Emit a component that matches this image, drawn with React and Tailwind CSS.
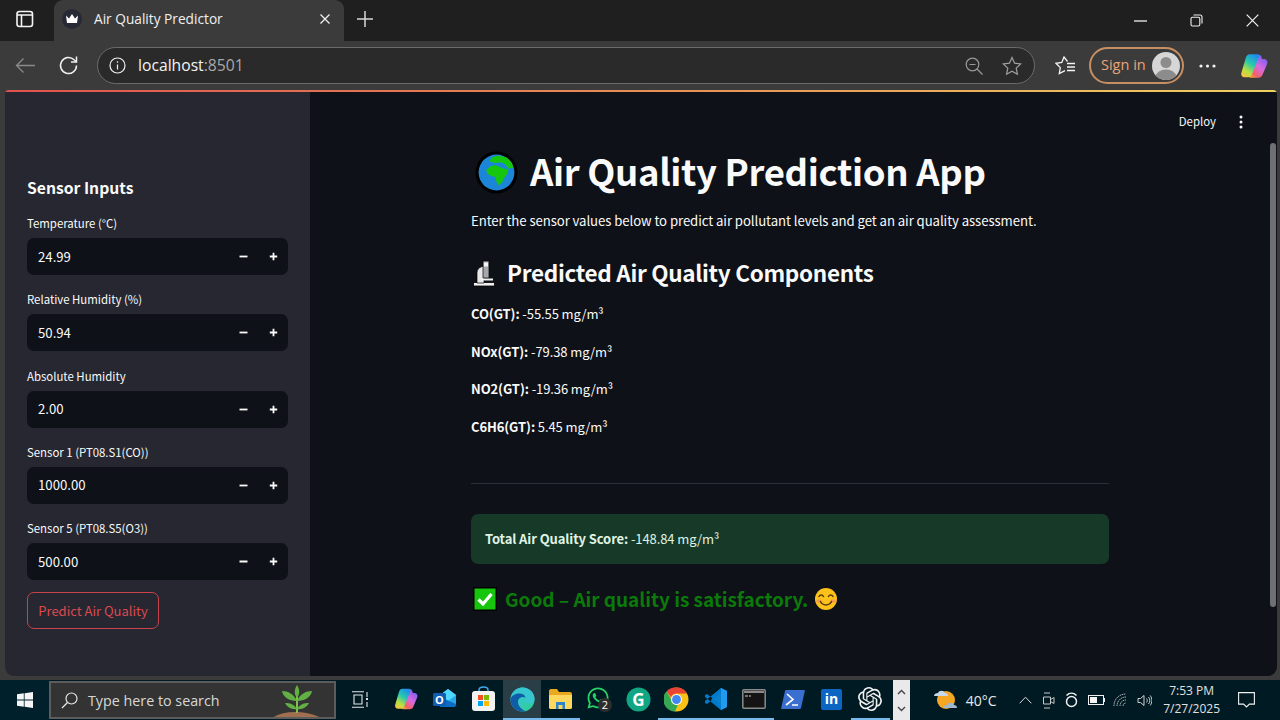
import React from "react";
import { SiOpenai } from "react-icons/si";
import { FaWhatsapp } from "react-icons/fa";

const CopilotLogo = ({ s = 26, id = "a" }) => (
  <svg width={s} height={s} viewBox="0 0 26 26">
    <defs>
      <linearGradient id={id + "l"} x1="0.75" y1="0" x2="0.2" y2="1">
        <stop offset="0" stopColor="#1f8af0" />
        <stop offset="0.4" stopColor="#25c8b0" />
        <stop offset="0.75" stopColor="#b8e040" />
        <stop offset="1" stopColor="#f5c542" />
      </linearGradient>
      <linearGradient id={id + "r"} x1="0.8" y1="0" x2="0.2" y2="1">
        <stop offset="0" stopColor="#6a5cf0" />
        <stop offset="0.5" stopColor="#d86ae0" />
        <stop offset="0.85" stopColor="#f0606a" />
        <stop offset="1" stopColor="#f59a3a" />
      </linearGradient>
    </defs>
    <path d="M17.500 2.500c1.200 0 2 .8 2.400 2l.5 2h1.800c2.400 0 3.800 2 3.100 4.300L21 21c-.6 1.800-2 3-3.800 3H10c-1.500 0-2-1-1.400-2.400L15 6c.4-1.200 1-3.500 2.500-3.500z" fill={`url(#${id}r)`} />
    <path d="M9 2h7.500c1.500 0 1.800 1 1.200 2.400L11 21c-.6 1.500-1.800 2.500-3.500 2.500h-3C2 23.500.6 21.500 1.300 19.200L5.500 5C6 3.200 7.300 2 9 2z" fill={`url(#${id}l)`} />
  </svg>
);

const GlobeEmoji = () => (
  <svg width="43" height="43" viewBox="0 0 42 42">
    <circle cx="21" cy="21" r="20.500" fill="#000" />
    <circle cx="21" cy="21" r="17.500" fill="#1b86d8" />
    <path d="M16 6.300L22.700 4.300 31 6.300 36 11.500 37.500 16.300 32.700 17 29.300 13 25.300 11 20 11.700 14.300 10.300z" fill="#16c60c" />
    <path d="M11 18.700L14.300 15.300 19.300 13.700 24.300 15.700 27.700 17 32.700 18 31 23 27.700 27.300 26.700 30.300 23.300 33.700 21 30.300 20 25.300 16 24.300 12 22.300z" fill="#16c60c" />
  </svg>
);

const Microscope = () => (
  <svg width="23" height="27" viewBox="0 0 23 27">
    <rect x=".5" y="22.500" width="21" height="3.500" fill="#f0f0f0" stroke="#000" strokeWidth=".8" />
    <path d="M4 23V12.500C4 9.500 6 7.500 9 6.500l2-.5v17z" fill="#e8e8e8" stroke="#000" strokeWidth=".7" />
    <rect x="10" y="1" width="6" height="17" fill="#a4a8ac" stroke="#000" strokeWidth=".7" />
    <rect x="11" y="2.500" width="4" height="4" fill="#f4f4f4" />
    <rect x="8" y="18.500" width="12" height="2" fill="#f0f0f0" />
  </svg>
);

const CheckEmoji = () => (
  <svg width="26" height="26" viewBox="0 0 26 26">
    <rect x="1" y="1" width="24" height="24" fill="#000" />
    <rect x="2.500" y="2.500" width="21" height="21" fill="#16c60c" />
    <path d="M6.500 13.500l4.500 4.500 8.500-10" fill="none" stroke="#fff" strokeWidth="3.200" />
  </svg>
);

const SmileEmoji = () => (
  <svg width="24" height="24" viewBox="0 0 24 24">
    <circle cx="12" cy="12" r="11" fill="#fcc21b" />
    <ellipse cx="5" cy="14" rx="2.800" ry="1.800" fill="#f49a50" />
    <ellipse cx="19" cy="14" rx="2.800" ry="1.800" fill="#f49a50" />
    <path d="M5 9.500c1-2 3.500-2 4.500 0M14.500 9.500c1-2 3.500-2 4.500 0M6.500 14.500c2 4.500 9 4.500 11 0" fill="none" stroke="#5a3a10" strokeWidth="1.500" strokeLinecap="round" />
  </svg>
);

const NumberInput = ({ label, value }) => (
  <div className="flex flex-col h-[76.250px]">
    <div className="h-[25px] text-[11.400px] leading-[20px] text-[#fafafa]">{label}</div>
    <div className="h-[37px] rounded-[7px] bg-[#0e1117] flex items-center pl-[11px]">
      <span className="flex-1 text-[13.200px] text-[#fafafa]">{value}</span>
      <span className="w-[31px] flex justify-center">
        <svg width="9" height="9" viewBox="0 0 9 9"><path d="M.5 4.500h8" stroke="#fafafa" strokeWidth="1.800" /></svg>
      </span>
      <span className="w-[29px] flex justify-center">
        <svg width="9" height="9" viewBox="0 0 9 9"><path d="M.8 4.500h7.400M4.500.8v7.400" stroke="#fafafa" strokeWidth="1.800" /></svg>
      </span>
    </div>
  </div>
);

const Reading = ({ name, value }) => (
  <p className="h-[37.700px] text-[13px] tracking-[-0.1px] leading-[24px] text-[#fafafa]">
    <b className="font-semibold">{name}:</b> {value} mg/m³
  </p>
);

const Slot = ({ active, run, children }) => (
  <div className={"w-[38.700px] h-[40px] flex items-center justify-center border-b-2 " + (run ? "border-[#76b9ed] " : "border-transparent ") + (active ? "bg-[#2a3e48]" : "")}>
    {children}
  </div>
);

const Tray = ({ w, children }) => (
  <div className="flex items-center justify-center shrink-0" style={{ width: w }}>{children}</div>
);

export default function App() {
  return (
    <div className="w-[1280px] h-[720px] overflow-hidden flex flex-col bg-[#3b3b3b] font-['Noto_Sans_CJK_SC',sans-serif]">
      {/* Title bar */}
      <div className="h-[41px] bg-[#1f1f1f] flex items-end font-['Open_Sans',sans-serif] shrink-0">
        <div className="w-[54px] h-[41px] flex items-center justify-center pb-[3px] pr-[4px]">
          <svg width="18" height="18" viewBox="0 0 18 18" fill="none" stroke="#f5f5f5" strokeWidth="1.600">
            <rect x="1" y="1.500" width="15.500" height="15" rx="2.500" />
            <path d="M1 5h15.500M5.500 5v11.500" />
          </svg>
        </div>
        <div className="w-[290px] h-[41px] mt-auto bg-[#3b3b3b] rounded-t-[9px] flex items-center pl-[8px] pr-[13px] pb-[3px]">
          <span className="w-[20px] h-[20px] rounded-full bg-[#262835] flex items-center justify-center">
            <svg width="14" height="12" viewBox="0 0 14 12"><path d="M1 2.500l3 3 3-4.500 3 4.500 3-3-1 7.500H2z" fill="#fff" /></svg>
          </span>
          <span className="ml-[12px] flex-1 text-[13.700px] text-[#f0f0f0]">Air Quality Predictor</span>
          <svg width="12" height="12" viewBox="0 0 12 12"><path d="M1.500 1.500l9 9M10.500 1.500l-9 9" stroke="#f0f0f0" strokeWidth="1.300" /></svg>
        </div>
        <div className="w-[42px] h-[41px] flex items-center justify-center pb-[3px]">
          <svg width="18" height="18" viewBox="0 0 18 18"><path d="M1 9h16M9 1v16" stroke="#d8d8d8" strokeWidth="1.500" /></svg>
        </div>
        <div className="flex-1" />
        <div className="w-[56px] h-[41px] flex items-center justify-center">
          <svg width="13" height="2" viewBox="0 0 13 2"><path d="M0 1h13" stroke="#f0f0f0" strokeWidth="1.300" /></svg>
        </div>
        <div className="w-[56px] h-[41px] flex items-center justify-center">
          <svg width="13" height="13" viewBox="0 0 13 13" fill="none" stroke="#f0f0f0" strokeWidth="1.100">
            <rect x="1" y="3.200" width="8.800" height="8.800" rx="1.500" />
            <path d="M3.500 1h6.500c1.200 0 2 .8 2 2v6.500" />
          </svg>
        </div>
        <div className="w-[56px] h-[41px] flex items-center justify-center">
          <svg width="13" height="13" viewBox="0 0 13 13"><path d="M.7.700l11.600 11.600M12.300.700L.7 12.300" stroke="#f5f5f5" strokeWidth="1.200" /></svg>
        </div>
      </div>

      {/* Toolbar */}
      <div className="h-[49px] flex items-center pl-[13px] font-['Open_Sans',sans-serif] shrink-0">
        <div className="w-[24px] flex justify-center">
          <svg width="21" height="17" viewBox="0 0 21 17" fill="none" stroke="#8a8a8a" strokeWidth="1.300"><path d="M20 8.500H1.500M8.500 1.500l-7 7 7 7" /></svg>
        </div>
        <div className="ml-[19px] w-[24px] flex justify-center">
          <svg width="21" height="21" viewBox="0 0 21 21" fill="none" stroke="#f0f0f0" strokeWidth="1.500">
            <path d="M18.500 10.500a8 8 0 1 1-2.400-5.700L18.500 7" />
            <path d="M18.500 1.500V7H13" />
          </svg>
        </div>
        <div className="ml-[17px] w-[938px] h-[37px] rounded-full bg-[#2a2a2a] border border-[#6b6b6b] flex items-center pl-[11px] pr-[12px]">
          <svg width="17" height="17" viewBox="0 0 17 17" fill="none" stroke="#f0f0f0" strokeWidth="1.200">
            <circle cx="8.500" cy="8.500" r="7.500" />
            <path d="M8.500 7.500v5M8.500 4.300v1.400" />
          </svg>
          <span className="ml-[12px] text-[15.700px] text-[#f4f4f4] flex-1">localhost<span className="text-[#a8a8a8]">:8501</span></span>
          <svg width="18" height="18" viewBox="0 0 18 18" fill="none" stroke="#9a9a9a" strokeWidth="1.200">
            <circle cx="7.500" cy="7.500" r="6.300" />
            <path d="M4.500 7.500h6M12 12l5.500 5.500" />
          </svg>
          <svg className="ml-[19px]" width="20" height="20" viewBox="0 0 20 20" fill="none" stroke="#a0a0a0" strokeWidth="1.200"><path d="M10 1.500l2.600 5.700 6.100.7-4.500 4.200 1.200 6.100L10 15.200l-5.400 3 1.200-6.100L1.300 7.900l6.100-.7z" /></svg>
        </div>
        <div className="ml-[19px] w-[22px] flex justify-center">
          <svg width="21" height="20" viewBox="0 0 21 20" fill="none" stroke="#f5f5f5" strokeWidth="1.300">
            <path d="M12.500 5.500L9 1 6.800 6.500 1 7.300l4.300 4.300-1 6 5.700-3" />
            <path d="M12 7.500h8M12 11h8M12 14.500h8" />
          </svg>
        </div>
        <div className="ml-[13px] w-[95px] h-[37px] rounded-full border-2 border-[#c68f63] flex items-center pl-[10px] pr-[2px]">
          <span className="flex-1 text-[14.500px] text-[#e8a679] pb-[2px]">Sign in</span>
          <svg width="28" height="28" viewBox="0 0 28 28">
            <clipPath id="av"><circle cx="14" cy="14" r="14" /></clipPath>
            <g clipPath="url(#av)">
              <rect width="28" height="28" fill="#d6d6d6" />
              <circle cx="14" cy="10.500" r="5.500" fill="#8c8c8c" />
              <ellipse cx="14" cy="24" rx="10" ry="6.500" fill="#8c8c8c" />
            </g>
          </svg>
        </div>
        <div className="ml-[4px] w-[38px] flex justify-center">
          <svg width="17" height="4" viewBox="0 0 17 4"><circle cx="2" cy="2" r="1.600" fill="#f0f0f0" /><circle cx="8.500" cy="2" r="1.600" fill="#f0f0f0" /><circle cx="15" cy="2" r="1.600" fill="#f0f0f0" /></svg>
        </div>
        <div className="ml-[14px] flex"><CopilotLogo id="top" s={28} /></div>
      </div>

      {/* Page */}
      <div className="h-[586px] ml-[5px] mr-[3px] shrink-0 flex flex-col rounded-b-[9px] rounded-t-[4px] overflow-hidden">
        <div className="h-[2px] shrink-0 bg-[linear-gradient(90deg,#e0524f,#e89a58_60%,#f0d060)]" />
        <div className="flex-1 min-h-0 flex">
          {/* Sidebar */}
          <aside className="w-[305px] bg-[#262730] flex flex-col px-[22px] pt-[84px]">
            <h2 className="h-[37px] text-[15.700px] leading-[24px] font-semibold text-[#fafafa]">Sensor Inputs</h2>
            <NumberInput label="Temperature (°C)" value="24.99" />
            <NumberInput label="Relative Humidity (%)" value="50.94" />
            <NumberInput label="Absolute Humidity" value="2.00" />
            <NumberInput label="Sensor 1 (PT08.S1(CO))" value="1000.00" />
            <NumberInput label="Sensor 5 (PT08.S5(O3))" value="500.00" />
            <button className="mt-[-2px] w-[132px] h-[37px] rounded-[7px] border border-[#c9424a] text-[#dc4a50] text-[13px] flex items-center justify-center">Predict Air Quality</button>
          </aside>
          {/* Main */}
          <main className="flex-1 bg-[#0e1117] flex">
            <div className="flex-1 flex flex-col">
              <div className="h-[60px] flex items-center justify-end pr-[27px] shrink-0">
                <span className="text-[11.400px] text-[#fafafa]">Deploy</span>
                <svg className="ml-[23px]" width="4" height="14" viewBox="0 0 4 14"><circle cx="2" cy="2" r="1.500" fill="#fafafa" /><circle cx="2" cy="7" r="1.500" fill="#fafafa" /><circle cx="2" cy="12" r="1.500" fill="#fafafa" /></svg>
              </div>
              <div className="ml-[161px] w-[638px] flex flex-col">
                <div className="mt-[-8px] h-[56px] flex items-center pl-[4px]">
                  <GlobeEmoji />
                  <h1 className="ml-[12px] text-[36.500px] tracking-[-0.35px] font-bold text-[#fafafa] whitespace-nowrap leading-[50px] pb-[2px]">Air Quality Prediction App</h1>
                </div>
                <p className="mt-[9px] h-[34px] text-[13.200px] tracking-[-0.08px] leading-[24px] text-[#fafafa]">Enter the sensor values below to predict air pollutant levels and get an air quality assessment.</p>
                <div className="mt-[7px] h-[46px] flex items-center pl-[2px]">
                  <Microscope />
                  <h2 className="ml-[11px] text-[22.500px] tracking-[-0.3px] font-semibold text-[#fafafa] whitespace-nowrap">Predicted Air Quality Components</h2>
                </div>
                <div className="mt-[6px]">
                  <Reading name="CO(GT)" value="-55.55" />
                  <Reading name="NOx(GT)" value="-79.38" />
                  <Reading name="NO2(GT)" value="-19.36" />
                  <Reading name="C6H6(GT)" value="5.45" />
                </div>
                <hr className="mt-[30px] border-0 h-px bg-[#2b2e36]" />
                <div className="mt-[30px] h-[50px] rounded-[7px] bg-[#173928] flex items-center px-[14px] text-[13px] tracking-[-0.1px] text-[#dff3e4]">
                  <span><b className="font-semibold">Total Air Quality Score:</b> -148.84 mg/m³</span>
                </div>
                <div className="mt-[20px] h-[30px] flex items-center pl-[1px]">
                  <CheckEmoji />
                  <span className="ml-[7px] text-[19px] tracking-[-0.03px] font-semibold text-[#0b7a0b] whitespace-nowrap">Good – Air quality is satisfactory.</span>
                  <span className="ml-[6px] flex"><SmileEmoji /></span>
                </div>
              </div>
            </div>
            <div className="w-[6px] h-[464px] mt-[51px] mr-[1px] bg-[#6f7074] rounded-full" />
          </main>
        </div>
      </div>

      <div className="h-[4px] shrink-0" />

      {/* Taskbar */}
      <div className="h-[40px] shrink-0 bg-[#001a24] flex items-stretch font-['Open_Sans',sans-serif] text-[#e8e8e8]">
        <div className="w-[49px] flex items-center justify-center bg-[#00202c]">
          <svg width="16" height="16" viewBox="0 0 16 16" fill="#f5f5f5"><path d="M0 2.300l6.800-1v6.300H0zM7.600 1.200L16 0v7.600H7.600zM0 8.400h6.800v6.300l-6.800-1zM7.600 8.400H16V16l-8.400-1.200z" /></svg>
        </div>
        <div className="w-[287px] mt-px mb-px border-2 border-[#5c5c5c] bg-[#333333] flex items-center pl-[10px] overflow-hidden">
          <svg width="17" height="17" viewBox="0 0 17 17" fill="none" stroke="#e8e8e8" strokeWidth="1.200"><circle cx="10.500" cy="6.500" r="5.500" /><path d="M6.500 10.500L1 16" /></svg>
          <span className="ml-[10px] flex-1 text-[14.300px] text-[#d8d8d8] pt-[2px]">Type here to search</span>
          <svg className="mr-[9px] mt-[2px]" width="56" height="36" viewBox="0 0 56 36">
            <path d="M2 36c6-5 14-7 24-7s20 2 28 7z" fill="#a06f4f" />
            <path d="M28 30V6" stroke="#7fbf50" strokeWidth="2" />
            <path d="M28 2c3 5 3 9 0 13-3-4-3-8 0-13zM28 18c-3-7-9-10-15-10 1 6 7 10 15 10zM28 18c3-7 9-10 15-10-1 6-7 10-15 10zM28 26c-3-5-7-6-12-6 2 4 7 7 12 6zM28 26c3-5 7-6 12-6-2 4-7 7-12 6z" fill="#62b044" />
          </svg>
        </div>
        <div className="w-[5px]" />
        <Slot>
          <svg width="17" height="17" viewBox="0 0 17 17" fill="none" stroke="#e8e8e8" strokeWidth="1.100"><path d="M0 .8h12M0 16.200h12M2 4h8v9H2zM15 1v5M15 11v5" /><path d="M14 8h2" strokeWidth="2" /></svg>
        </Slot>
        <div className="w-[7px]" />
        <Slot><CopilotLogo id="tb" s={24} /></Slot>
        <Slot>
          <svg width="25" height="24" viewBox="0 0 25 24">
            <path d="M8 8l8-6 8 6v9c0 2-1 3-3 3H8z" fill="#28a8ea" />
            <path d="M8 8l8-6 8 6-8 6z" fill="#50d9ff" />
            <path d="M8 20V10l16 7c0 2-1 3-3 3z" fill="#0a6cc4" />
            <rect x="1" y="6" width="13" height="13" rx="1.500" fill="#0f5cb0" />
            <text x="7.500" y="16.500" textAnchor="middle" fontSize="11" fontWeight="700" fill="#fff" fontFamily="Open Sans">O</text>
          </svg>
        </Slot>
        <Slot>
          <svg width="25" height="26" viewBox="0 0 25 26">
            <path d="M8 6V4c0-2 1.500-3 4.500-3s4.500 1 4.500 3v2" fill="none" stroke="#3fa8e8" strokeWidth="1.500" />
            <rect x="1" y="5" width="23" height="20" rx="3" fill="#f2f2f2" />
            <rect x="7" y="9" width="5" height="5" fill="#f25022" />
            <rect x="13" y="9" width="5" height="5" fill="#7fba00" />
            <rect x="7" y="15" width="5" height="5" fill="#00a4ef" />
            <rect x="13" y="15" width="5" height="5" fill="#ffb900" />
          </svg>
        </Slot>
        <Slot active run>
          <svg width="25" height="25" viewBox="0 0 25 25">
            <defs>
              <linearGradient id="eg" x1="0" y1="0" x2="1" y2="1"><stop offset="0" stopColor="#35c1f1" /><stop offset="1" stopColor="#2fd08a" /></linearGradient>
            </defs>
            <circle cx="12.500" cy="12.500" r="12" fill="url(#eg)" />
            <path d="M.5 13C1 6 6 .5 12.500.5 19 .5 24.500 5.500 24.500 12c0 3-2.500 4.500-5 4.500-2.500 0-4.500-1-4.500-2.500 0-.7.800-1 .8-2.500C15.800 8.500 13 6.500 9.500 6.500 5 6.500 1 9 .5 13z" fill="#37c6d0" />
            <path d="M.5 12.500C1 9 5 6.500 9.500 6.500c3 0 5.500 1.500 6 4-3-1.500-7 0-7.500 3.500-.4 4 2.500 8 7.500 10.200C14.500 24.500 13.500 24.500 12.500 24.500 6 24.500.5 19 .5 12.500z" fill="#0f5ca8" />
          </svg>
        </Slot>
        <Slot run>
          <svg width="25" height="22" viewBox="0 0 25 22">
            <path d="M1 3c0-1 .6-2 2-2h6l2 3h11c1.500 0 2 1 2 2v13c0 1-.6 2-2 2H3c-1.400 0-2-1-2-2z" fill="#e8a81f" />
            <path d="M1 7h23v12c0 1-.6 2-2 2H3c-1.400 0-2-1-2-2z" fill="#ffd75e" />
            <path d="M8 14h9v7h-2.500v-4h-4v4H8z" fill="#2a84c6" />
          </svg>
        </Slot>
        <Slot>
          <svg width="26" height="26" viewBox="0 0 26 26">
            <foreignObject x="0" y="0" width="24" height="24"><FaWhatsapp size={24} color="#25d366" /></foreignObject>
            <circle cx="19" cy="19" r="7" fill="#2d2d2d" />
            <text x="19" y="23" textAnchor="middle" fontSize="11" fill="#fff" fontFamily="Open Sans">2</text>
          </svg>
        </Slot>
        <Slot>
          <svg width="25" height="25" viewBox="0 0 25 25">
            <circle cx="12.500" cy="12.500" r="12" fill="#11a683" />
            <text x="12.500" y="18.500" textAnchor="middle" fontSize="17" fontWeight="700" fill="#fff" fontFamily="Open Sans">G</text>
          </svg>
        </Slot>
        <Slot run>
          <svg width="25" height="25" viewBox="0 0 48 48">
            <circle cx="24" cy="24" r="23" fill="#fbc116" />
            <path d="M24 1a23 23 0 0 1 20 11.500H24a11.500 11.500 0 0 0-10.500 7L5 8A23 23 0 0 1 24 1z" fill="#ea4335" />
            <path d="M5 8l9.500 17a11.500 11.500 0 0 0 12 10L21 47A23 23 0 0 1 5 8z" fill="#34a853" />
            <circle cx="24" cy="24" r="10.500" fill="#fff" />
            <circle cx="24" cy="24" r="8.500" fill="#4285f4" />
          </svg>
        </Slot>
        <Slot run>
          <svg width="24" height="24" viewBox="0 0 24 24">
            <path d="M17 1l6 3v16l-6 3-10-10z" fill="#0a7fcb" />
            <path d="M17 1v22l6-3V4z" fill="#1f9cf0" />
            <path d="M1 8l2-1 14 11v5L1 10zM1 16l2 1L17 6V1L1 14z" fill="#007acc" />
          </svg>
        </Slot>
        <Slot run>
          <svg width="24" height="20" viewBox="0 0 24 20">
            <rect x=".8" y=".8" width="22.400" height="18.400" rx="1" fill="#141414" stroke="#8a8a8a" strokeWidth="1.500" />
            <path d="M2 2h20v2H2z" fill="#8a8a8a" />
            <path d="M3 7h3M7 7h2" stroke="#cfcfcf" strokeWidth="1" />
          </svg>
        </Slot>
        <Slot>
          <svg width="24" height="19" viewBox="0 0 24 19">
            <path d="M5 0h18c.7 0 1 .4.800 1L20 18c-.2.600-.6 1-1.300 1H1c-.7 0-1-.4-.800-1L4 1c.2-.6.400-1 1-1z" fill="#3a6fd0" />
            <path d="M6 4l6 5.500L5 15M11 15h6" fill="none" stroke="#fff" strokeWidth="1.600" />
          </svg>
        </Slot>
        <Slot>
          <div className="w-[21px] h-[21px] bg-[#0a66c2] rounded-[2px] flex items-center justify-center text-white text-[14px] font-bold leading-none">in</div>
        </Slot>
        <Slot run><SiOpenai size={24} color="#f2f2f2" /></Slot>
        <div className="w-[3px]" />
        <div className="w-[17px] bg-[#e9e9e9] flex flex-col items-center justify-around py-[3px]">
          <svg width="9" height="6" viewBox="0 0 9 6" fill="none" stroke="#444" strokeWidth="1.400"><path d="M1 5l3.500-3.500L8 5" /></svg>
          <svg width="9" height="6" viewBox="0 0 9 6" fill="none" stroke="#444" strokeWidth="1.400"><path d="M1 1l3.500 3.500L8 1" /></svg>
        </div>
        <div className="w-[23px]" />
        <div className="flex items-center w-[25px]">
          <svg width="25" height="24" viewBox="0 0 25 24">
            <circle cx="13" cy="12" r="9" fill="#f5a623" />
            <path d="M1 8c0-2 2-3 4-3 1-3 6-3 7 0 2 0 3 1 3 3z" fill="#c8d8e8" />
            <path d="M10 20c0-2 2-3 4-3 1-3 6-3 7 0 2 0 3 1 3 3z" fill="#9fb8cf" />
          </svg>
        </div>
        <div className="ml-[8px] w-[36px] flex items-center text-[14px]">40°C</div>
        <div className="w-[12px]" />
        <Tray w={24}>
          <svg width="13" height="8" viewBox="0 0 13 8" fill="none" stroke="#d8d8d8" strokeWidth="1"><path d="M.7 7.300L6.500 1.200l5.800 6.100" /></svg>
        </Tray>
        <Tray w={22}>
          <svg width="13" height="17" viewBox="0 0 13 17" fill="none" stroke="#c8c8c8" strokeWidth="1"><path d="M1.500 5h7v7h-7zM2 1h6M2 16h6" /><path d="M8.500 7.500l3.500-2v6l-3.500-2" /></svg>
        </Tray>
        <Tray w={24}>
          <svg width="13" height="16" viewBox="0 0 13 16" fill="none" stroke="#f0f0f0" strokeWidth="1.500"><circle cx="6.500" cy="9.500" r="5" /><path d="M1.500 3.500c3-3 7-3 10 0" /></svg>
        </Tray>
        <Tray w={25}>
          <svg width="17" height="10" viewBox="0 0 17 10"><rect x=".5" y=".5" width="15" height="9" fill="none" stroke="#f0f0f0" /><rect x="2" y="2" width="7" height="6" fill="#f5f5f5" /><rect x="16" y="3" width="1" height="4" fill="#f0f0f0" /></svg>
        </Tray>
        <Tray w={24}>
          <svg width="15" height="14" viewBox="0 0 15 14" fill="none" stroke="#c0c0c0" strokeWidth=".9" strokeDasharray="1.500 .6"><path d="M1 13C1 6 6 1 13 1M4 13c0-5 4-9 9-9M7 13c0-3 2-6 6-6M10 13c0-1.500 1-3 3-3" /></svg>
        </Tray>
        <Tray w={23}>
          <svg width="15" height="13" viewBox="0 0 15 13" fill="none" stroke="#d0d0d0" strokeWidth="1"><path d="M1 4.500h2.500L7 1.500v10L3.500 8.500H1zM9.500 4.500c1 1 1 3 0 4M11.500 3c1.800 2 1.800 5 0 7M13.200 1.500c2.200 3 2.200 7 0 10" /></svg>
        </Tray>
        <div className="ml-[4px] w-[64px] flex flex-col items-center justify-center text-[12px] leading-[18px] text-[#e0e0e0]">
          <span>7:53 PM</span>
          <span>7/27/2025</span>
        </div>
        <div className="flex-1 flex items-center justify-center pr-[10px]">
          <svg width="17" height="16" viewBox="0 0 17 16" fill="none" stroke="#f0f0f0" strokeWidth="1.100"><path d="M.6.600h15.800v11.500h-5L8.500 15l-2.900-2.900h-5z" /></svg>
        </div>
      </div>
    </div>
  );
}
